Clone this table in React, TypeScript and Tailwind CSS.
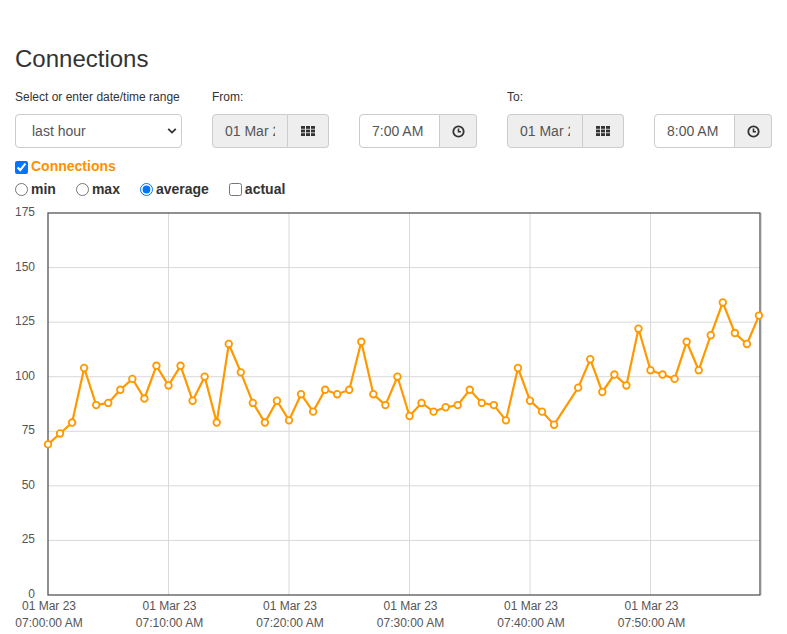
import React from "react";

const FONT = '"Liberation Sans", Arial, Helvetica, sans-serif';

const data: [number, number][] = [
  [0, 69], [1, 74], [2, 79], [3, 104], [4, 87], [5, 88], [6, 94], [7, 99], [8, 90], [9, 105],
  [10, 96], [11, 105], [12, 89], [13, 100], [14, 79], [15, 115], [16, 102], [17, 88], [18, 79], [19, 89],
  [20, 80], [21, 92], [22, 84], [23, 94], [24, 92], [25, 94], [26, 116], [27, 92], [28, 87], [29, 100],
  [30, 82], [31, 88], [32, 84], [33, 86], [34, 87], [35, 94], [36, 88], [37, 87], [38, 80], [39, 104],
  [40, 89], [41, 84], [42, 78], [44, 95], [45, 108], [46, 93], [47, 101], [48, 96], [49, 122],
  [50, 103], [51, 101], [52, 99], [53, 116], [54, 103], [55, 119], [56, 134], [57, 120], [58, 115], [59, 128],
];

const OFF = 199;
const X0 = 48;
const X1 = 760;
const Y_TOP = 213 - OFF;
const Y_BOT = 595 - OFF;
const PPM = 12.05;
const PPU = (Y_BOT - Y_TOP) / 175;
const px = (m: number) => X0 + m * PPM;
const py = (v: number) => Y_BOT - v * PPU;

function GridIcon() {
  const sq: React.ReactNode[] = [];
  for (let r = 0; r < 3; r++)
    for (let c = 0; c < 3; c++)
      sq.push(<rect key={`${r}-${c}`} x={c * 5} y={r * 3.6} width={4} height={2.8} fill="#333" />);
  return (
    <svg width="14" height="10" viewBox="0 0 14 10">
      {sq}
    </svg>
  );
}

function ClockIcon() {
  return (
    <svg width="13" height="13" viewBox="0 0 13 13">
      <circle cx="6.5" cy="6.5" r="5.2" fill="none" stroke="#333" strokeWidth="1.8" />
      <path d="M6.5 3.4 V6.8 H9" fill="none" stroke="#333" strokeWidth="1.6" />
    </svg>
  );
}

function DateGroup() {
  return (
    <div className="flex h-[34px] w-[117px]">
      <input
        readOnly
        value="01 Mar 2023"
        className="w-[76px] h-full border border-[#ccc] rounded-l-[4px] bg-[#eee] px-[12px] text-[14px] text-[#555] outline-none"
      />
      <div className="w-[41px] h-full border border-l-0 border-[#ccc] rounded-r-[4px] bg-[#eee] flex items-center justify-center">
        <GridIcon />
      </div>
    </div>
  );
}

function TimeGroup({ t }: { t: string }) {
  return (
    <div className="flex h-[34px] w-[118px]">
      <input
        readOnly
        value={t}
        className="w-[81px] h-full border border-[#ccc] rounded-l-[4px] bg-white px-[12px] text-[14px] text-[#555] outline-none"
      />
      <div className="w-[37px] h-full border border-l-0 border-[#ccc] rounded-r-[4px] bg-[#eee] flex items-center justify-center">
        <ClockIcon />
      </div>
    </div>
  );
}

function Chart() {
  const hLines = [25, 50, 75, 100, 125, 150];
  const yLabels = [0, 25, 50, 75, 100, 125, 150, 175];
  const vLines = [10, 20, 30, 40, 50];
  const xLabels = [
    ["07:00:00 AM", 0],
    ["07:10:00 AM", 10],
    ["07:20:00 AM", 20],
    ["07:30:00 AM", 30],
    ["07:40:00 AM", 40],
    ["07:50:00 AM", 50],
  ] as const;
  const path = data.map(([m, v], i) => `${i === 0 ? "M" : "L"}${px(m).toFixed(1)} ${py(v).toFixed(1)}`).join(" ");
  return (
    <svg width="787" height="435" viewBox="0 0 787 435" className="block">
      {hLines.map((v) => (
        <line key={v} x1={X0} x2={X1} y1={py(v)} y2={py(v)} stroke="#d9d9d9" strokeWidth="1" />
      ))}
      {vLines.map((m) => (
        <line key={m} x1={px(m)} x2={px(m)} y1={Y_TOP} y2={Y_BOT} stroke="#d9d9d9" strokeWidth="1" />
      ))}
      <rect x={X0} y={Y_TOP} width={X1 - X0} height={Y_BOT - Y_TOP} fill="none" stroke="#555" strokeWidth="1.3" />
      <line x1={X1 + 1.5} x2={X1 + 1.5} y1={Y_TOP} y2={Y_BOT} stroke="#ddd" strokeWidth="1" />
      {yLabels.map((v) => (
        <text key={v} x={35} y={py(v) + 3} textAnchor="end" fontSize="12" fill="#555" fontFamily={FONT}>
          {v}
        </text>
      ))}
      {xLabels.map(([t, m]) => (
        <g key={t}>
          <text x={px(m) + 1} y={411} textAnchor="middle" fontSize="12" fill="#555" fontFamily={FONT}>
            01 Mar 23
          </text>
          <text x={px(m) + 1} y={428} textAnchor="middle" fontSize="12" fill="#555" fontFamily={FONT}>
            {t}
          </text>
        </g>
      ))}
      <path d={path} fill="none" stroke="#ff9900" strokeWidth="2.2" strokeLinejoin="round" />
      {data.map(([m, v]) => (
        <circle key={m} cx={px(m)} cy={py(v)} r="3.3" fill="#fff" stroke="#ff9900" strokeWidth="1.8" />
      ))}
    </svg>
  );
}

export default function App() {
  return (
    <div className="w-[787px] h-[634px] bg-white text-[#333] overflow-hidden" style={{ fontFamily: FONT }}>
      <div className="pl-[15px]">
        <div className="pt-[46px] h-[71px] text-[24px] leading-[26px]">Connections</div>
        <div className="flex gap-[30px] mt-[18px]">
          <div className="w-[167px]">
            <div className="h-[17px] leading-[17px] text-[12px] mb-[8px]">Select or enter date/time range</div>
            <div className="relative h-[34px]">
              <select
                defaultValue="last hour"
                className="appearance-none w-full h-full border border-[#ccc] rounded-[4px] bg-white pl-[16px] text-[14px] text-[#555] outline-none"
              >
                <option>last hour</option>
              </select>
              <svg className="absolute right-[5px] top-[13px]" width="10" height="8" viewBox="0 0 10 8">
                <path d="M1.2 1.8 L5 5.6 L8.8 1.8" fill="none" stroke="#333" strokeWidth="1.8" />
              </svg>
            </div>
          </div>
          <div>
            <div className="h-[17px] leading-[17px] text-[12px] mb-[8px]">From:</div>
            <div className="flex gap-[30px]">
              <DateGroup />
              <TimeGroup t="7:00 AM" />
            </div>
          </div>
          <div>
            <div className="h-[17px] leading-[17px] text-[12px] mb-[8px]">To:</div>
            <div className="flex gap-[30px]">
              <DateGroup />
              <TimeGroup t="8:00 AM" />
            </div>
          </div>
        </div>
        <div className="mt-[8px] h-[20px] flex items-center">
          <input type="checkbox" defaultChecked className="w-[13px] h-[13px] m-0 mt-[2px]" />
          <span className="ml-[3px] text-[14px] font-bold text-[#ff9000]">Connections</span>
        </div>
        <div className="mt-[3px] h-[20px] flex items-center text-[14px] font-bold">
          <label className="flex items-center mr-[20px]">
            <input type="radio" name="agg" className="w-[13px] h-[13px] m-0" />
            <span className="ml-[3px]">min</span>
          </label>
          <label className="flex items-center mr-[20px]">
            <input type="radio" name="agg" className="w-[13px] h-[13px] m-0" />
            <span className="ml-[3px]">max</span>
          </label>
          <label className="flex items-center mr-[20px]">
            <input type="radio" name="agg" defaultChecked className="w-[13px] h-[13px] m-0" />
            <span className="ml-[3px]">average</span>
          </label>
          <label className="flex items-center">
            <input type="checkbox" className="w-[13px] h-[13px] m-0" />
            <span className="ml-[3px]">actual</span>
          </label>
        </div>
      </div>
      <Chart />
    </div>
  );
}
